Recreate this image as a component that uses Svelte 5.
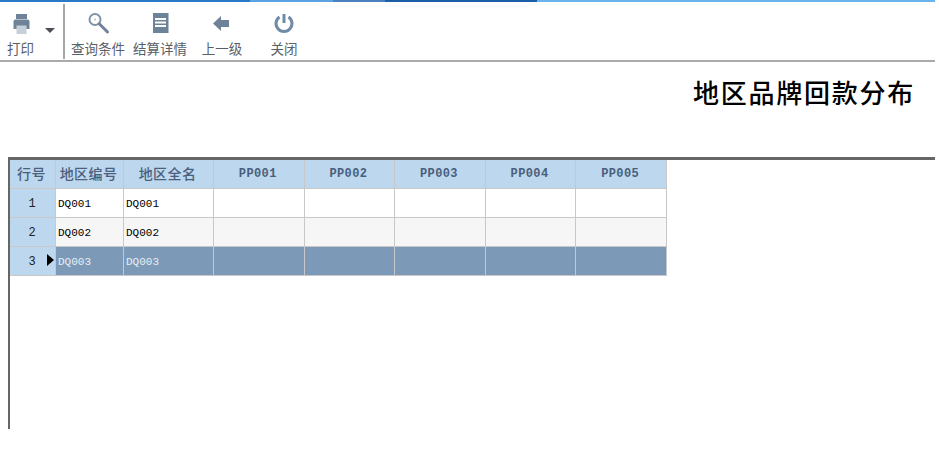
<script>
  const cols = ['PP001', 'PP002', 'PP003', 'PP004', 'PP005'];
  const rows = [
    { n: 1, code: 'DQ001', name: 'DQ001', kind: 'plain' },
    { n: 2, code: 'DQ002', name: 'DQ002', kind: 'alt' },
    { n: 3, code: 'DQ003', name: 'DQ003', kind: 'sel' }
  ];
</script>

<div class="page">
  <div class="strip"><span class="s1"></span><span class="s2"></span><span class="s3"></span><span class="s4"></span><span class="s5"></span></div>
  <div class="toolbar">
    <div class="print">
      <div class="tool print-tool">
        <svg class="ico" viewBox="0 0 24 24" width="24" height="24">
          <path d="M7 3h11v5H7z" />
          <path d="M6.500 8.500h12a2 2 0 0 1 2 2V18h-16v-7.500a2 2 0 0 1 2-2z" />
          <path class="paper" d="M7.500 14.500h10V23h-10z" />
        </svg>
        <span>打印</span>
      </div>
      <i class="caret"></i>
    </div>
    <div class="sep"></div>
    <div class="tool">
      <svg class="ico" viewBox="0 0 24 24" width="24" height="24">
        <circle class="ring" cx="9" cy="8.500" r="5.500" />
        <circle class="dot" cx="9" cy="8.500" r="1" />
        <path class="handle" d="M13.500 13l8 8" />
      </svg>
      <span>查询条件</span>
    </div>
    <div class="tool">
      <svg class="ico" viewBox="0 0 24 24" width="24" height="24">
        <path fill-rule="evenodd" d="M5 2h15.500v20H5zM7 7v2h11V7zM7 10.500v2h11v-2zM7 14v2h11v-2z" />
      </svg>
      <span>结算详情</span>
    </div>
    <div class="tool">
      <svg class="ico" viewBox="0 0 24 24" width="24" height="24">
        <path d="M3 12.500L11 5v4h8v7h-8v4z" />
      </svg>
      <span>上一级</span>
    </div>
    <div class="tool">
      <svg class="ico" viewBox="0 0 24 24" width="24" height="24">
        <path class="power" d="M7.500 5.900a8 8 0 1 0 9 0" />
        <path class="power" d="M12 3v9" />
      </svg>
      <span>关闭</span>
    </div>
  </div>

  <h1 class="title">地区品牌回款分布</h1>

  <div class="grid">
    <div class="row head">
      <div class="cell rn">行号</div>
      <div class="cell c1">地区编号</div>
      <div class="cell c2">地区全名</div>
      {#each cols as c}<div class="cell pp">{c}</div>{/each}
    </div>
    {#each rows as r}
      <div class="row {r.kind}">
        <div class="cell rn">
          {r.n}
          {#if r.kind === 'sel'}<i class="mark"></i>{/if}
        </div>
        <div class="cell c1 val">{r.code}</div>
        <div class="cell c2 val">{r.name}</div>
        {#each cols as c}<div class="cell pp"></div>{/each}
      </div>
    {/each}
  </div>
</div>

<style>
  :global(body) {
    margin: 0;
    background: #fff;
  }
  .page {
    width: 935px;
    height: 460px;
    overflow: hidden;
    font-family: "Noto Sans CJK SC", "Liberation Sans", sans-serif;
  }
  .strip {
    display: flex;
    height: 2px;
  }
  .s1 { width: 250px; background: #2a78c8; }
  .s2 { width: 83px; background: #5aa2e2; }
  .s3 { width: 52px; background: #4a80c0; }
  .s4 { width: 152px; background: #1d5ea8; }
  .s5 { flex: 1; background: #6ab4ee; }
  .toolbar {
    display: flex;
    height: 58px;
    border-bottom: 2px solid #aaa;
  }
  .print {
    display: flex;
    width: 63px;
    position: relative;
  }
  .caret {
    position: absolute;
    left: 45px;
    top: 26px;
    border-left: 5.500px solid transparent;
    border-right: 5.500px solid transparent;
    border-top: 5.500px solid #4a4f55;
  }
  .sep {
    width: 2px;
    height: 55px;
    margin-top: 2px;
    margin-right: 2px;
    background: #a6a6a6;
  }
  .tool {
    width: 62px;
    display: flex;
    flex-direction: column;
    align-items: center;
    color: #5a6068;
    font-size: 13.500px;
    line-height: 16px;
  }
  .print .print-tool { width: 41px; }
  .ico {
    margin-top: 9px;
    margin-bottom: 5px;
    fill: #6f8398;
    overflow: visible;
  }
  .ico .paper { fill: #c6d0da; }
  .ico .ring { fill: none; stroke: #7f93a8; stroke-width: 2; }
  .ico .dot { fill: #b4c0cc; }
  .ico .handle { fill: none; stroke: #6f8398; stroke-width: 3; stroke-linecap: round; }
  .ico .power { fill: none; stroke: #6f8ba6; stroke-width: 3; stroke-linecap: butt; }
  .title {
    margin: 0;
    height: 95px;
    padding: 14px 20px 0 0;
    box-sizing: border-box;
    text-align: right;
    font-size: 26px;
    line-height: 32px;
    font-weight: 500;
    letter-spacing: 1.750px;
    color: #000;
  }
  .grid {
    height: 269px;
    border-top: 3px solid #666;
    border-left: 2px solid #666;
    margin-left: 8px;
  }
  .row {
    display: flex;
    height: 29px;
  }
  .cell {
    box-sizing: border-box;
    height: 29px;
    border-right: 1px solid #c8c8c8;
    border-bottom: 1px solid #c8c8c8;
    display: flex;
    align-items: center;
    justify-content: center;
    position: relative;
  }
  .rn {
    width: 46px;
    padding: 1px 1px 0 0;
    background: #bdd7ee;
    color: #222;
    font-family: "Liberation Mono", "Noto Sans CJK SC", monospace;
    font-size: 12px;
  }
  .c1 { width: 68px; }
  .c2 { width: 90px; }
  .pp { width: 90.600px; }
  .head .cell {
    padding: 0 2px 2px 0;
    background: #bdd7ee;
    color: #4a5f7c;
    font-size: 14px;
    font-weight: 500;
    letter-spacing: 0.400px;
  }
  .head .rn {
    color: #4a5f7c;
    font-family: "Noto Sans CJK SC", sans-serif;
  }
  .head .pp {
    padding-bottom: 0;
    font-family: "Liberation Mono", monospace;
    font-size: 12px;
    font-weight: 700;
  }
  .val {
    justify-content: flex-start;
    padding: 1px 0 0 2px;
    font-family: "Liberation Mono", monospace;
    font-size: 11px;
    color: #000;
  }
  .plain .cell:not(.rn) { background: #fff; }
  .alt .cell:not(.rn) { background: #f6f6f6; }
  .sel .cell:not(.rn) { background: #7c99b7; color: #e8eef5; }
  .mark {
    position: absolute;
    left: 37px;
    top: 7px;
    border-top: 6.500px solid transparent;
    border-bottom: 6.500px solid transparent;
    border-left: 7px solid #000;
  }
</style>
